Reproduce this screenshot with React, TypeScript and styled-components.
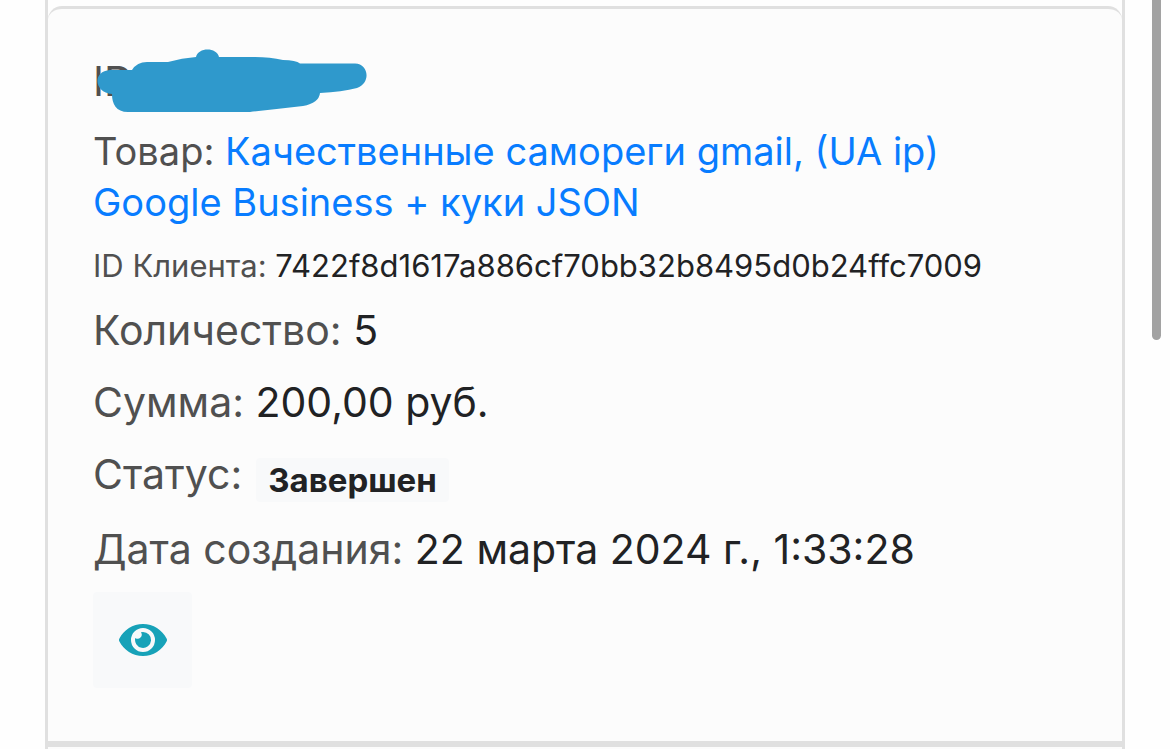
import React from 'react';
import styled, { createGlobalStyle } from 'styled-components';
import { FaEye } from 'react-icons/fa';

const GlobalStyle = createGlobalStyle`
  *, *::before, *::after { box-sizing: border-box; }
  html, body { margin: 0; overflow: hidden; background: #fefefe; }
  body { font-family: Inter, "Liberation Sans", sans-serif; color: #212224; }
`;

const Page = styled.div`
  position: relative;
  height: 100vh;
  overflow: hidden;
  padding: 0 45px;
`;

const List = styled.main`
  min-height: 100%;
  padding-top: 6px;
  border: solid #e0e0e0;
  border-width: 0 3px;
`;

const Card = styled.article`
  padding: 42px 44px 53px 45px;
  border: solid #e0e0e0;
  border-width: 3px 0;
  background: #fcfcfc;

  &:first-child {
    border-radius: 14px 14px 0 0;
  }
`;

const sizes = {
  small: { font: 31, line: 46 },
  medium: { font: 38, line: 51 },
  large: { font: 41, line: 60 },
};

const Row = styled.div<{ $size: keyof typeof sizes; $gap?: number }>`
  margin-bottom: ${({ $gap = 12 }) => $gap}px;
  font-size: ${({ $size }) => sizes[$size].font}px;
  line-height: ${({ $size }) => sizes[$size].line}px;
`;

const Label = styled.span`
  color: #505050;
`;

const ProductLink = styled.a`
  color: #087cff;
  text-decoration: none;
`;

const HiddenId = styled.span`
  position: relative;
  display: inline-block;
`;

const Scribble = styled.svg`
  position: absolute;
  left: 3px;
  top: -5px;
`;

const StatusRow = styled(Row)`
  display: flex;
  align-items: center;
  gap: 14px;
`;

const Badge = styled.strong`
  margin-top: 12px;
  padding: 0 12px;
  border-radius: 4px;
  background: #f8f9fa;
  font-size: 33px;
  font-weight: 700;
  line-height: 44px;
`;

const ViewButton = styled.button`
  display: flex;
  align-items: center;
  justify-content: center;
  width: 99px;
  height: 96px;
  padding: 0;
  border: 0;
  border-radius: 4px;
  background: #f8f9fa;
  color: #17a2b8;
`;

const ScrollThumb = styled.div`
  position: absolute;
  top: 0;
  right: 9px;
  width: 9px;
  height: 340px;
  border-radius: 0 0 5px 5px;
  background: #a2a2a2;
`;

export default function App() {
  return (
    <Page>
      <GlobalStyle />
      <List>
        <Card>
          <Row $size="large" $gap={15}>
            <HiddenId>
              <Label>ID</Label>
              <Scribble width="274" height="70" viewBox="96 46 274 70" aria-hidden="true">
                <path
                  fill="#2f99cc"
                  d="M110 70H132Q137 62 147 62H168Q182 58 196 57C198 47 217 47 219 57H255Q270 57 283 60Q296 60 300 63.500H355C369 64 371 83 357 88Q342 92 320 93Q319 103 303 106Q277 109 250 112H128C116 112 112 104 112 94C94 93 92 71 110 70Z"
                />
              </Scribble>
            </HiddenId>
          </Row>
          <Row $size="medium" $gap={15}>
            <Label>Товар: </Label>
            <ProductLink href="#product">
              Качественные самореги gmail, (UA ip) Google Business + куки JSON
            </ProductLink>
          </Row>
          <Row $size="small" $gap={11}>
            <Label>ID Клиента: </Label>
            7422f8d1617a886cf70bb32b8495d0b24ffc7009
          </Row>
          <Row $size="large">
            <Label>Количество: </Label>5
          </Row>
          <Row $size="large">
            <Label>Сумма: </Label>200,00 руб.
          </Row>
          <StatusRow $size="large" $gap={15}>
            <Label>Статус:</Label>
            <Badge>Завершен</Badge>
          </StatusRow>
          <Row $size="large" $gap={13}>
            <Label>Дата создания: </Label>22 марта 2024 г., 1:33:28
          </Row>
          <ViewButton type="button" aria-label="Просмотр">
            <FaEye size={48} />
          </ViewButton>
        </Card>
        <Card aria-hidden="true" />
      </List>
      <ScrollThumb />
    </Page>
  );
}
